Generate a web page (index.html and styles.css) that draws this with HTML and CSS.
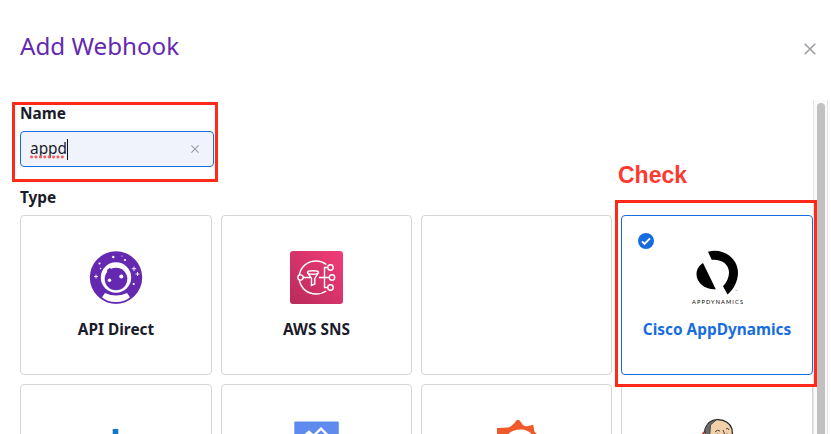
FILE: index.html
```html
<!DOCTYPE html>
<html lang="en">
<head>
<meta charset="utf-8">
<title>Add Webhook</title>
<link rel="stylesheet" href="styles.css">
</head>
<body>
<main class="dialog">
  <header class="header">
    <h1 class="title">Add Webhook</h1>
    <svg class="close" viewBox="0 0 12 12"><path d="M.7.7l10.6 10.6M11.3.7L.7 11.3"/></svg>
  </header>
  <div class="body">
    <section class="form">
      <div class="label">Name</div>
      <div class="field">
        <span class="value">appd</span><span class="caret"></span>
        <svg class="clear" viewBox="0 0 8 8"><path d="M.4.4l7.2 7.2M7.6.4L.4 7.6"/></svg>
        <svg class="spelling" viewBox="0 0 36 4"><path d="M1.5 2H35"/></svg>
      </div>
      <div class="label type-label">Type</div>
      <div class="grid">
        <div class="card">
          <svg class="icon api" viewBox="0 0 53 53">
            <circle cx="26" cy="26.500" r="26.200" fill="#6429b0"/>
            <circle cx="26" cy="26.500" r="15.200" fill="#fff"/>
            <circle cx="26" cy="28" r="11.300" fill="#6429b0"/>
            <path d="M17 19l3-2.500 1 2 3-1.200 2 1.700 6-.5 3 4-3 4H18z" fill="#6429b0"/>
            <circle cx="31.300" cy="25.500" r="2" fill="#fff"/><circle cx="19.500" cy="29.200" r="1.700" fill="#fff"/>
            <path d="M12.500 42q13.500 6 27 0l2 5q-6 5.500-15.500 5.500t-15.500-5.500z" fill="#6429b0"/>
            <path d="M15 42q11 5 22 0l3 4.200q-4.700 4.800-14 4.800t-14-4.800z" fill="#fff"/>
            <g fill="#fff"><circle cx="23.300" cy="6" r="1.200"/><circle cx="35" cy="9" r="1.100"/><circle cx="9.500" cy="12.500" r="1.100"/><circle cx="10.500" cy="17.500" r=".8"/><circle cx="43.700" cy="33" r="1.100"/><circle cx="32" cy="5" r=".6"/></g>
            <path d="M6 23.500v4M4 25.500h4M44 15.500v4.500M41.700 17.700h4.500M47.500 21v4M45.500 23h4" stroke="#fff" stroke-width=".9"/>
          </svg>
          <div class="name">API Direct</div>
        </div>
        <div class="card">
          <svg class="icon" viewBox="0 0 53 53">
            <defs><linearGradient id="pink" x1="0" y1="1" x2="1" y2="0"><stop offset="0" stop-color="#b82a5b"/><stop offset="1" stop-color="#f23d78"/></linearGradient></defs>
            <rect width="53" height="53" rx="3" fill="url(#pink)"/>
            <g fill="none" stroke="#fff" stroke-width="1.400">
              <path d="M9.300 24C11 15 18 10 26 10q6 0 10.300 3.500M9.300 29C11 38 18 43 26 43q6 0 10.300-3"/>
              <circle cx="10.500" cy="26.500" r="2.600"/><circle cx="40.500" cy="16.500" r="2.700"/><circle cx="42" cy="26.500" r="2.700"/><circle cx="40.500" cy="36.500" r="2.700"/>
              <path d="M13 26.500h7M29 26.500h10.300M37.700 16.500h-3.200v20h3.200"/>
              <ellipse cx="23" cy="21.500" rx="5.500" ry="1.700"/>
              <path d="M17.500 21.500l4 6v7l3.300-1.500v-5.500l3.700-6"/>
            </g>
          </svg>
          <div class="name">AWS SNS</div>
        </div>
        <div class="card"></div>
        <div class="card selected">
          <svg class="check" viewBox="0 0 16 16"><circle cx="8" cy="8" r="8" fill="#176de0"/><path d="M4 8.400l2.500 2.500 5.500-5.500" fill="none" stroke="#fff" stroke-width="2"/></svg>
          <svg class="icon" viewBox="0 0 53 53">
            <path d="M17 .7C33-3.500 47 8 47 21.500c0 9-4.500 17-10.500 22l-4.500-8.200C36 31 38 26 38 21.500c0-8-7-13.500-17.300-12.700zM12 12l12.800 26.300C14 39 5.500 31.500 5.500 23.500c0-5 2.400-9 6.500-11.500z"/>
            <path d="M44.500 39.500h2" stroke="#999" stroke-width=".6"/>
            <text class="brand" x="1" y="53" textLength="51">APPDYNAMICS</text>
          </svg>
          <div class="name">Cisco AppDynamics</div>
        </div>
        <div class="card">
          <svg class="icon" viewBox="0 0 53 53"><path d="M22.700 9h5.600v21h-5.600z" fill="#1278ca"/></svg>
        </div>
        <div class="card">
          <svg class="icon" viewBox="0 0 53 53"><rect x="4.300" y="1.500" width="44.500" height="45" rx="1" fill="#5f8bee"/><path d="M14 16l5-4.200 4.500 4 7.500-7.200 9 9" fill="none" stroke="#fff" stroke-width="2.300"/></svg>
        </div>
        <div class="card">
          <svg class="icon" viewBox="0 0 53 53"><path d="M7 30V8l11.500-.5q3-1 6-4.500 3.500-6.500 7 0 2 3.500 5.500 3.200l6.200-1.500 1.300 7 4 4v14z" fill="#f05a2a"/><path d="M14 30Q13 9.500 31 9.500q14 0 16 20.500z" fill="#fff"/></svg>
        </div>
        <div class="card">
          <svg class="icon" viewBox="0 0 53 53">
            <path d="M14 10l-6 7v8h10zM38 10l8 7v7H34z" fill="#d92632"/>
            <path d="M14 24V10Q17-.7 27-.4 38 0 41 9l1 15z" fill="#f1d0aa" stroke="#252525" stroke-width="1.200"/>
            <path d="M14 20V8.500Q17 1 25 0L19.500 5l-.5 7-1 9z" fill="#6c6b70" stroke="#333" stroke-width=".8"/>
            <path d="M24 12q2-3 5-1M35 9q2-2 3 1M24 15q3-2 5 0M33 15q3-2 6 0M32 10l2 5" fill="none" stroke="#554235" stroke-width="1"/>
            <path d="M14.500 13q-3-1-2 4l3 2z" fill="#f1d0aa" stroke="#252525" stroke-width=".7"/>
          </svg>
        </div>
      </div>
    </section>
    <div class="scrollbar"><div class="thumb"></div></div>
  </div>
</main>
<div class="mark name-mark"></div>
<div class="mark check-mark"></div>
<div class="note">Check</div>
</body>
</html>
```
FILE: styles.css
```css
* { box-sizing: border-box; }
body { margin: 0; background: #fff; color: #1b1c2b; font-family: "Noto Sans", sans-serif; }
.dialog { height: 434px; overflow: hidden; }
.header { height: 100px; padding: 29px 15px 0 20px; display: flex; justify-content: space-between; align-items: flex-start; }
.title { margin: 0; color: #6429b0; font-size: 24.2px; line-height: 34px; font-weight: 400; }
.close { width: 12px; height: 12px; margin-top: 14px; fill: none; stroke: #999ba3; stroke-width: 1.5; }
.body { display: flex; height: 334px; }
.form { width: 813px; padding: 3px 0 0 20px; flex-shrink: 0; }
.label { height: 28px; line-height: 22px; font-size: 15.4px; font-weight: 700; }
.field { position: relative; width: 194px; height: 36px; display: flex; align-items: center; padding: 0 14px 0 9px; border: 1px solid #176de0; border-radius: 4px; background: #f0f3fc; }
.value { font-size: 15.4px; line-height: 22px; }
.caret { width: 1px; height: 21px; background: #111; }
.clear { width: 8px; height: 8px; margin-left: auto; margin-top: -1px; fill: none; stroke: #999ba3; stroke-width: 1.1; }
.spelling { position: absolute; left: 9px; top: 23px; width: 36px; height: 4px; }
.spelling path { fill: none; stroke: #ff5a52; stroke-width: 2.9; stroke-linecap: round; stroke-dasharray: .1 4.3; }
.type-label { margin-top: 20px; }
.grid { display: grid; grid-template-columns: 192px 191px 191px 192px; grid-auto-rows: 160px; gap: 9px; }
.card { position: relative; display: flex; flex-direction: column; align-items: center; padding-top: 35px; border: 1px solid #d5d5d7; border-radius: 4px; }
.selected { border-color: #176de0; color: #176de0; }
.icon { width: 53px; height: 53px; overflow: visible; flex-shrink: 0; }
.api { margin-left: 1px; }
.selected .icon { fill: #000; }
.brand { font-family: Lato, sans-serif; font-size: 5.6px; }
.name { margin-top: 15px; font-size: 15.4px; line-height: 22px; font-weight: 700; white-space: nowrap; }
.check { position: absolute; left: 16px; top: 17px; width: 16px; height: 16px; }
.scrollbar { width: 15px; padding: 3px 2px 0 3px; border: solid #e5e5e5; border-width: 0 1px; background: #fafafa; }
.thumb { width: 8px; height: 340px; border-radius: 4px; background: #c1c1c1; }
.mark { position: absolute; border: 3px solid #ff2a1a; }
.name-mark { left: 12px; top: 102px; width: 206px; height: 80px; }
.check-mark { left: 615px; top: 200px; width: 202px; height: 187px; }
.note { position: absolute; left: 618px; top: 161px; color: #ff3830; font: 700 23px/28px "Liberation Sans", sans-serif; }
```
